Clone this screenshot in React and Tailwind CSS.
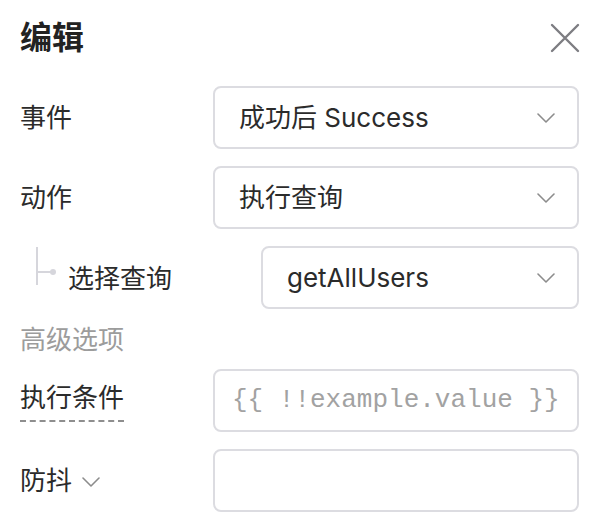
import React from 'react';

const Chevron = ({ className = '' }) => (
  <svg width="18" height="10" viewBox="0 0 18 10" fill="none" className={className}>
    <path d="M1 1l8 8 8-8" stroke="#8c8c8c" strokeWidth="1.6" strokeLinecap="round" strokeLinejoin="round" />
  </svg>
);

const Select = ({ value, className = '' }) => (
  <div className={`flex h-[63px] items-center justify-between rounded-lg border-2 border-[#dcdce1] bg-white pl-[24px] pr-[22px] ${className}`}>
    <span className="text-[26px] text-[#2b2b2b]">{value}</span>
    <Chevron />
  </div>
);

const Row = ({ label, children, labelWidth = 'w-[193px]' }) => (
  <div className="flex h-[63px] items-center">
    <div className={`${labelWidth} shrink-0 flex items-center`}>{label}</div>
    <div className="flex-1">{children}</div>
  </div>
);

const App = () => {
  return (
    <div className="w-[596px] h-[522px] bg-white pl-5 pr-[17px] font-['Inter','Noto_Sans_CJK_SC',sans-serif] text-[#2b2b2b]">
      <header className="flex h-[76px] items-center justify-between">
        <h1 className="text-[32px] font-bold text-[#222]">编辑</h1>
        <svg width="30" height="30" viewBox="0 0 30 30" className="mr-[-1px]">
          <path d="M2 2l26 26M28 2L2 28" stroke="#7d7d82" strokeWidth="2.4" strokeLinecap="round" />
        </svg>
      </header>

      <div className="mt-[10px] flex flex-col gap-[17px]">
        <Row label={<span className="text-[26px]">事件</span>}>
          <Select value="成功后 Success" />
        </Row>
        <Row label={<span className="text-[26px]">动作</span>}>
          <Select value="执行查询" />
        </Row>
        <Row
          labelWidth="w-[241px]"
          label={
            <div className="flex h-[63px] items-center">
              <svg width="24" height="40" viewBox="0 0 24 40" className="ml-[15px] self-start">
                <path d="M2 1v38M2 26h14" stroke="#d6d6dc" strokeWidth="2" />
                <circle cx="18" cy="26" r="3" fill="#d6d6dc" />
              </svg>
              <span className="ml-[9px] mt-[2px] text-[26px]">选择查询</span>
            </div>
          }
        >
          <Select value="getAllUsers" />
        </Row>
      </div>

      <div className="flex h-[60px] items-center text-[26px] text-[#9c9c9c]">高级选项</div>

      <div className="flex flex-col gap-[17px]">
        <Row
          label={
            <span className="border-b-2 border-dashed border-[#8e8e8e] pb-[4px] text-[26px] leading-[36px]">执行条件</span>
          }
        >
          <div className="flex h-[63px] items-center rounded-lg border-2 border-[#dcdce1] pl-[17px]">
            <span className="font-['Liberation_Mono',monospace] text-[26px] text-[#a2a2a2]">{'{{ !!example.value }}'}</span>
          </div>
        </Row>
        <Row
          label={
            <div className="flex items-center gap-[10px]">
              <span className="text-[26px]">防抖</span>
              <Chevron className="mt-[2px]" />
            </div>
          }
        >
          <div className="h-[63px] rounded-lg border-2 border-[#dcdce1]" />
        </Row>
      </div>
    </div>
  );
};

export default App;
